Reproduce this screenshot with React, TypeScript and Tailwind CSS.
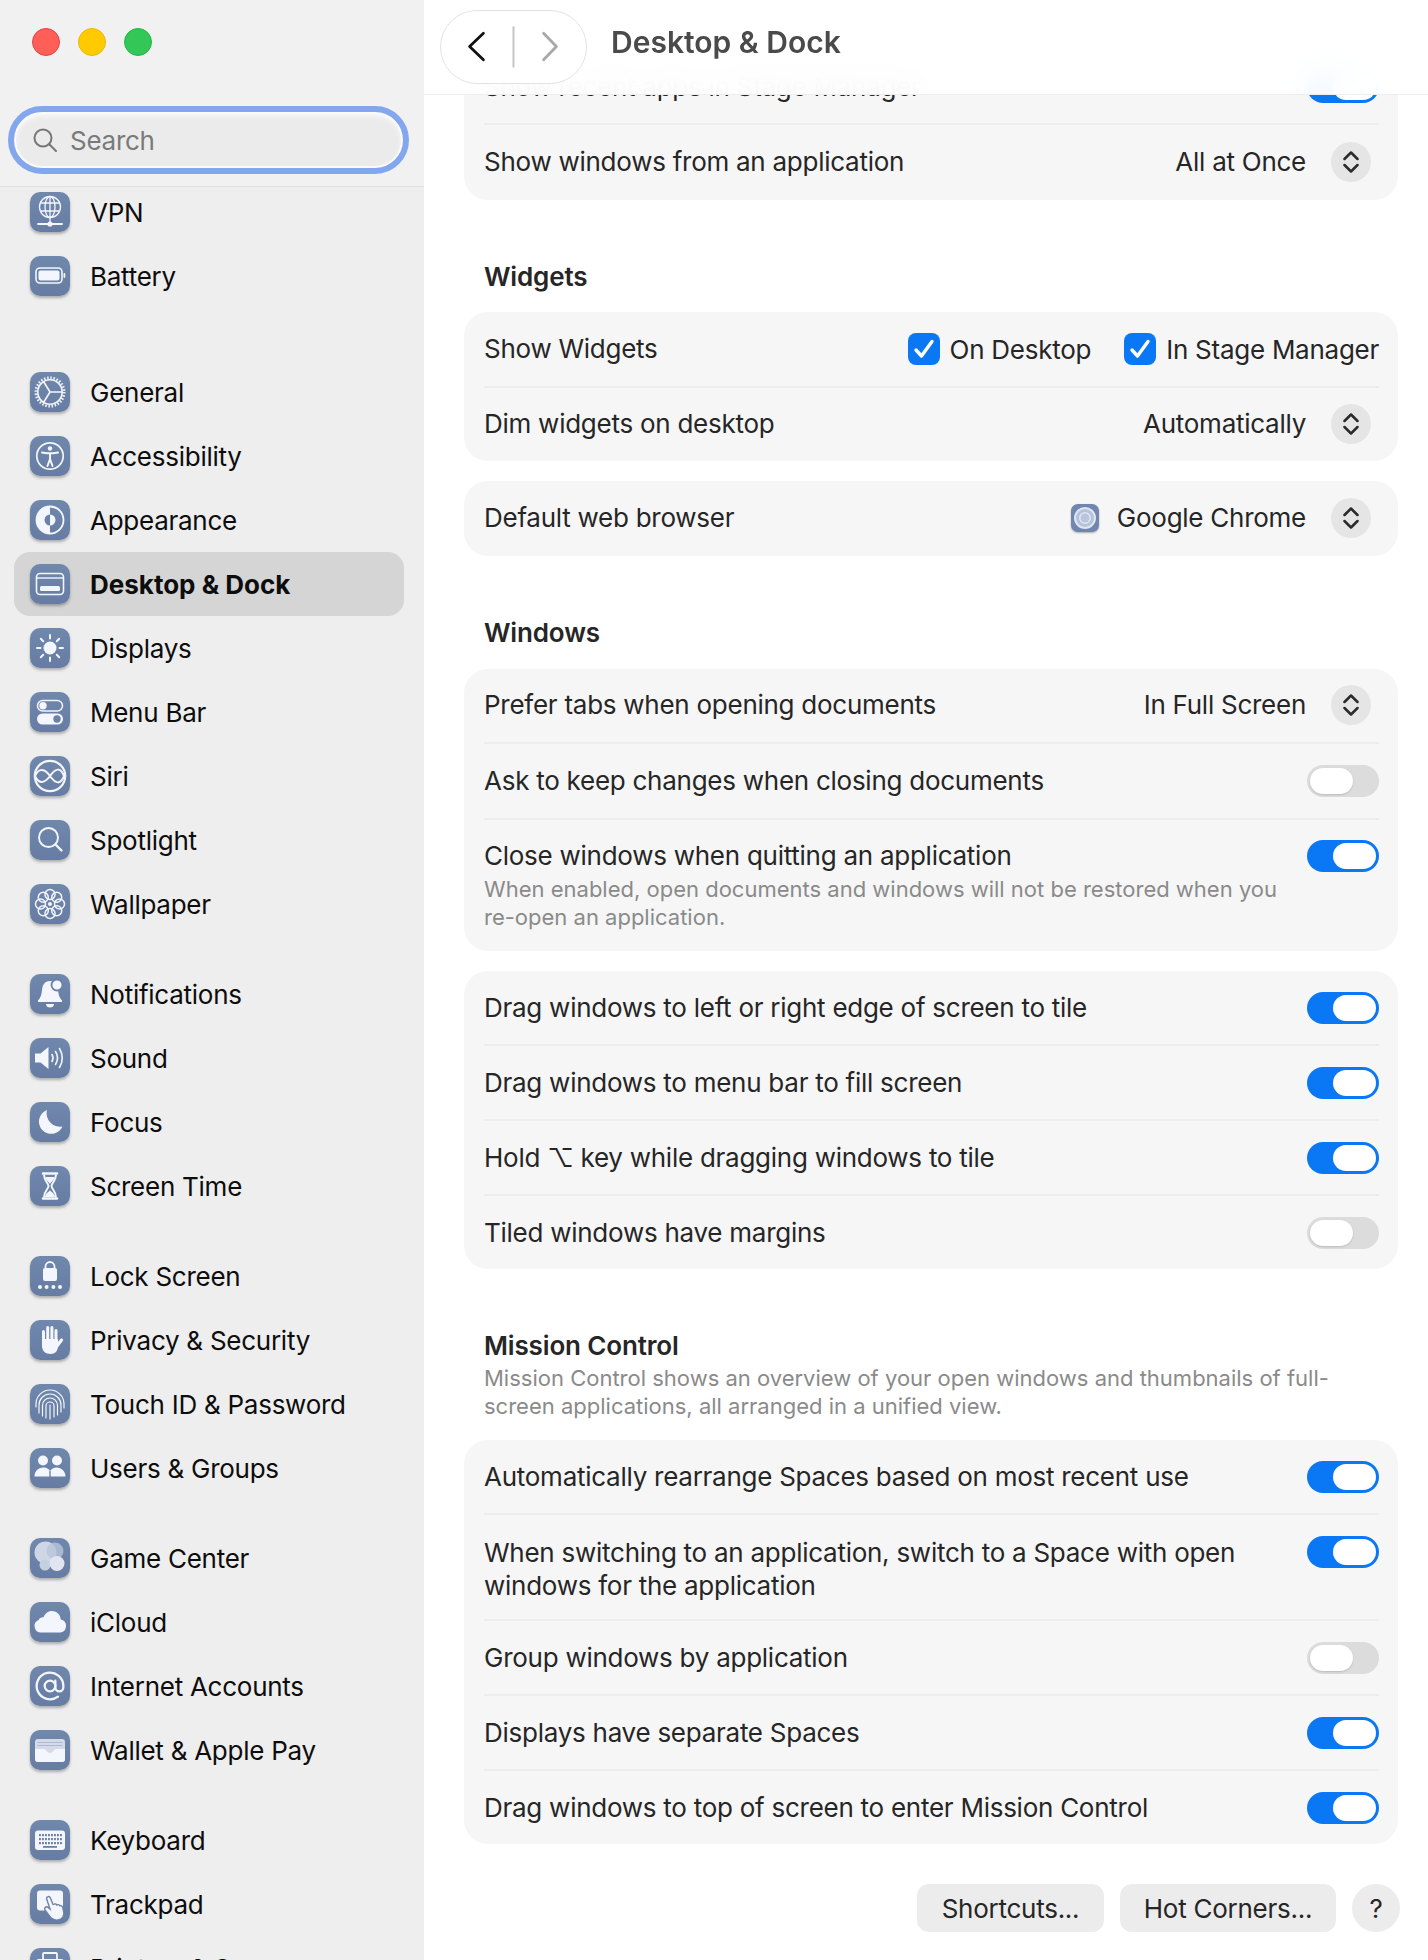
import React from "react";
import { AtSign } from "lucide-react";

const W = "#f3f6fc";
const B = "#6b81a7";

const Svg = ({ children }: { children: React.ReactNode }) => (
  <svg viewBox="0 0 40 40" className="w-10 h-10 block" fill="none">{children}</svg>
);

const icons: Record<string, React.ReactNode> = {
  vpn: (
    <Svg>
      <g stroke={W} strokeWidth="1.3">
        <circle cx="20" cy="15" r="10.5" />
        <ellipse cx="20" cy="15" rx="5" ry="10.5" />
        <path d="M20 4.5V25.5M10.5 11H29.5M10.5 19H29.5M20 25.5V32" />
        <path d="M8 32H32" strokeWidth="1.8" strokeLinecap="round" />
      </g>
      <circle cx="20" cy="32" r="2.6" fill={W} />
    </Svg>
  ),
  battery: (
    <Svg>
      <rect x="6" y="12" width="26" height="15" rx="4" stroke={W} strokeWidth="1.6" />
      <rect x="8.5" y="14.5" width="21" height="10" rx="2" fill={W} />
      <rect x="33.5" y="17" width="1.8" height="5" rx="0.9" fill={W} />
    </Svg>
  ),
  general: (
    <Svg>
      <circle cx="20" cy="20" r="14.2" stroke={W} strokeWidth="2.6" strokeDasharray="1.5 1.68" />
      <circle cx="20" cy="20" r="12.2" stroke={W} strokeWidth="1.6" />
      <path d="M20 20L13.5 9.5M20 20H32M20 20L13.5 30.5" stroke={W} strokeWidth="1.6" />
    </Svg>
  ),
  accessibility: (
    <Svg>
      <circle cx="20" cy="20" r="13.2" stroke={W} strokeWidth="1.7" />
      <circle cx="20" cy="12.5" r="2.2" fill={W} />
      <path d="M12 16.5C15 17.5 25 17.5 28 16.5M20 17.5V23M20 23L17.5 30M20 23L22.5 30" stroke={W} strokeWidth="2" strokeLinecap="round" />
    </Svg>
  ),
  appearance: (
    <Svg>
      <circle cx="20" cy="20" r="13.5" stroke={W} strokeWidth="1.8" />
      <path d="M20 6.5A13.5 13.5 0 0 0 20 33.5Z" fill={W} />
      <path d="M20 14.5A5.5 5.5 0 0 0 20 25.5Z" fill={B} />
      <path d="M20 14.5A5.5 5.5 0 0 1 20 25.5Z" fill={W} />
    </Svg>
  ),
  desktop: (
    <Svg>
      <rect x="6.5" y="9.5" width="27" height="21" rx="3.5" stroke={W} strokeWidth="1.6" />
      <path d="M7 14H33" stroke={W} strokeWidth="1.4" />
      <rect x="10" y="22" width="20" height="5" rx="1.5" fill={W} />
    </Svg>
  ),
  displays: (
    <Svg>
      <circle cx="20" cy="20" r="6.5" fill={W} />
      <path d="M20 7V10.5M20 29.5V33M7 20H10.5M29.5 20H33M10.8 10.8L13.2 13.2M26.8 26.8L29.2 29.2M10.8 29.2L13.2 26.8M26.8 13.2L29.2 10.8" stroke={W} strokeWidth="2" strokeLinecap="round" />
    </Svg>
  ),
  menubar: (
    <Svg>
      <rect x="7.5" y="8.5" width="25" height="10.5" rx="5.25" stroke={W} strokeWidth="1.5" />
      <circle cx="13" cy="13.7" r="3.7" fill={W} />
      <rect x="7" y="21.5" width="26" height="11" rx="5.5" fill={W} />
      <circle cx="27" cy="27" r="3.7" fill={B} />
    </Svg>
  ),
  siri: (
    <Svg>
      <circle cx="20" cy="20" r="15.2" stroke={W} strokeWidth="2.2" />
      <path d="M5 20C9 11 15 13 20 20S31 31 35 17M5 20C9 29 15 27 20 20S31 9 35 23" stroke={W} strokeWidth="2" />
    </Svg>
  ),
  spotlight: (
    <Svg>
      <circle cx="18.5" cy="17.5" r="9.5" stroke={W} strokeWidth="1.9" />
      <path d="M25.5 24.5L31.5 30.5" stroke={W} strokeWidth="2.4" strokeLinecap="round" />
    </Svg>
  ),
  wallpaper: (
    <Svg>
      <g stroke={W} strokeWidth="1.5">
        {[0, 45, 90, 135, 180, 225, 270, 315].map((a) => (
          <circle key={a} cx="20" cy="10.5" r="5" transform={`rotate(${a} 20 20)`} />
        ))}
      </g>
      <circle cx="20" cy="20" r="2" fill={W} />
    </Svg>
  ),
  notifications: (
    <Svg>
      <path d="M20 7C14.5 7 12.5 11 12 16C11.5 21 10.5 24 8 26.5V28H32V26.5C29.5 24 28.5 21 28 16C27.5 11 25.5 7 20 7Z" fill={W} />
      <path d="M16 30H24C24 32.5 22 33.5 20 33.5S16 32.5 16 30Z" fill={W} />
      <circle cx="27" cy="11" r="5.5" fill={W} stroke={B} strokeWidth="1.8" />
    </Svg>
  ),
  sound: (
    <Svg>
      <path d="M5 15.5H10.5L18.5 9V31L10.5 24.5H5Z" fill={W} strokeLinejoin="round" />
      <path d="M22 16.5C23.2 18.5 23.2 21.5 22 23.5M25.5 13.5C28 17.5 28 22.5 25.5 26.5M29.5 10.5C33 16.5 33 23.5 29.5 29.5" stroke={W} strokeWidth="1.6" strokeLinecap="round" />
    </Svg>
  ),
  focus: (
    <Svg>
      <path d="M17 8A12.3 12.3 0 1 0 32.5 24.5A13.5 13.5 0 0 1 17 8Z" fill={W} />
    </Svg>
  ),
  screentime: (
    <Svg>
      <path d="M13 7.5H27M13 32.5H27" stroke={W} strokeWidth="2.6" strokeLinecap="round" />
      <path d="M14 8.5C14 15 18.5 17 18.5 20S14 25 14 31.5M26 8.5C26 15 21.5 17 21.5 20S26 25 26 31.5" stroke={W} strokeWidth="2" />
      <path d="M15.5 11H24.5C24 14.5 21 16 20 18C19 16 16 14.5 15.5 11ZM15 31C15.5 27 19 26 20 24C21 26 24.5 27 25 31Z" fill={W} />
    </Svg>
  ),
  lock: (
    <Svg>
      <rect x="13" y="12" width="14" height="13" rx="2" fill={W} />
      <path d="M15.5 13V10.5A4.5 4.5 0 0 1 24.5 10.5V13" stroke={W} strokeWidth="1.8" />
      {[10, 16.6, 23.4, 30].map((x) => (
        <circle key={x} cx={x} cy="31" r="2" fill={W} />
      ))}
    </Svg>
  ),
  privacy: (
    <Svg>
      <g stroke={W} strokeWidth="3" strokeLinecap="round">
        <path d="M13.5 22V11.5M17.7 22V7.5M21.9 22V7.5M26 22V10.5" />
        <path d="M27 26L31.5 20" strokeWidth="3.2" />
      </g>
      <path d="M12 19H28V26C28 31 25 34 20.5 34C15.5 34 12 31 12 26Z" fill={W} />
    </Svg>
  ),
  touchid: (
    <Svg>
      <g stroke={W} strokeWidth="1.2" strokeLinecap="round">
        <path d="M6 23V20A14 14 0 0 1 34 20V24" />
        <path d="M9 29V21A11 11 0 0 1 31 21V28" />
        <path d="M12.5 32V21.5A7.5 7.5 0 0 1 27.5 21.5V31" />
        <path d="M16 34V22A4 4 0 0 1 24 22V33" />
        <path d="M20 21V35" />
      </g>
    </Svg>
  ),
  users: (
    <Svg>
      <circle cx="13" cy="12.5" r="5" fill={W} />
      <circle cx="27" cy="12.5" r="5" fill={W} />
      <path d="M4.5 28.5C4.5 23 8.5 19.5 13 19.5S19 21.5 20 23C21 21.5 23 19.5 27 19.5S35.5 23 35.5 28.5Z" fill={W} />
      <path d="M20 23V29" stroke={B} strokeWidth="1.4" />
    </Svg>
  ),
  gamecenter: (
    <Svg>
      <circle cx="15.5" cy="14.5" r="11" fill="#cfd7e6" />
      <circle cx="25" cy="13" r="8.5" fill="#b9c4d9" fillOpacity="0.8" />
      <circle cx="15" cy="27" r="5.5" fill="#c4cfe0" />
      <circle cx="27" cy="25.5" r="7.5" fill="#e0e6f1" />
    </Svg>
  ),
  icloud: (
    <Svg>
      <path d="M11 30.5A6.5 6.5 0 0 1 8.6 18C9.5 16 11.5 15 13.5 15.3C15 11.5 18 9 22 9C27 9 30.5 13 30.7 17.5A6.6 6.6 0 0 1 30.5 30.5Z" fill={W} />
    </Svg>
  ),
  internet: <AtSign size={32} strokeWidth={1.7} color={W} />,
  wallet: (
    <Svg>
      <rect x="5" y="9" width="30" height="23" rx="3" fill="#d4dae8" />
      <path d="M7.5 12.5H32.5M7.5 15.5H32.5" stroke="#aeb9cf" strokeWidth="1.2" />
      <path d="M5 19H14C16 19 17 23 20 23S24 19 26 19H35V29A3 3 0 0 1 32 32H8A3 3 0 0 1 5 29Z" fill={W} />
    </Svg>
  ),
  keyboard: (
    <Svg>
      <rect x="5" y="10.5" width="30" height="19.5" rx="3" fill={W} />
      <g fill={B}>
        {[14, 18, 22].map((y) =>
          [9, 12, 15, 18, 21, 24, 27, 30].map((x) => <rect key={`${x}-${y}`} x={x} y={y} width="1.9" height="2.2" />),
        )}
        <rect x="13" y="26" width="14" height="1.8" />
      </g>
    </Svg>
  ),
  trackpad: (
    <Svg>
      <rect x="7" y="6.5" width="26" height="20" rx="3" fill={W} />
      <path d="M16.5 14.5A2 2 0 0 1 20.3 13.7L23 20.5L24.2 20.1A2 2 0 0 1 26.7 21L27.5 20.8A2 2 0 0 1 30 21.8A2 2 0 0 1 32.6 23L33.6 27C35 32 32 35.5 28 36C24 36.5 21.5 35 19.5 32L15 26A2 2 0 0 1 18 23.4L20 25Z" fill={W} stroke={B} strokeWidth="1.4" />
    </Svg>
  ),
  printer: (
    <Svg>
      <rect x="13" y="5" width="14" height="9" rx="1" stroke={W} strokeWidth="1.8" />
      <rect x="6" y="11" width="28" height="14" rx="3" fill={W} />
    </Svg>
  ),
};

const Row = ({ icon, label, active, className = "" }: { icon: string; label: string; active?: boolean; className?: string }) => (
  <div className={`h-16 shrink-0 ml-[14px] w-[390px] pl-4 rounded-2xl flex items-center gap-5 ${active ? "bg-[#d5d5d5] font-bold tracking-normal" : ""} ${className}`}>
    <div className="w-10 h-10 shrink-0 rounded-[10px] bg-gradient-to-b from-[#7188ad] to-[#667ca3] shadow-[0_2px_3px_rgba(0,0,0,0.28)] flex items-center justify-center">
      {icons[icon]}
    </div>
    <span className="mt-[2px] text-[26px] leading-8 text-[#0d0d0d] whitespace-nowrap">{label}</span>
  </div>
);

const Sep = () => <div className="h-[2px] bg-[#ededed]" />;

const Toggle = ({ on }: { on?: boolean }) =>
  on ? (
    <div className="w-[72px] h-8 shrink-0 rounded-full bg-[#0a78f5] flex items-center justify-end pr-[3px]">
      <div className="w-[43px] h-[26px] rounded-full bg-white" />
    </div>
  ) : (
    <div className="w-[72px] h-8 shrink-0 rounded-full bg-[#dcdcdc] flex items-center pl-[3px]">
      <div className="w-[43px] h-[26px] rounded-full bg-white shadow-[0_1px_2px_rgba(0,0,0,0.15)]" />
    </div>
  );

const Stepper = () => (
  <div className="w-10 h-10 shrink-0 mr-2 -mt-[1px] rounded-full bg-[#e5e5e5] flex items-center justify-center">
    <svg viewBox="0 0 16 24" className="w-4 h-6 block" fill="none" stroke="#2b2b2b" strokeWidth="2.5" strokeLinecap="round" strokeLinejoin="round">
      <path d="M1.5 9L8 2.5L14.5 9M1.5 15L8 21.5L14.5 15" />
    </svg>
  </div>
);

const Check = ({ label }: { label: string }) => (
  <div className="flex items-center gap-[10px]">
    <div className="w-8 h-8 rounded-lg bg-[#0a78f5] flex items-center justify-center">
      <svg viewBox="0 0 32 32" className="w-8 h-8" fill="none" stroke="#fff" strokeWidth="3.4" strokeLinecap="round" strokeLinejoin="round">
        <path d="M8 17L13.5 23L24 8.5" />
      </svg>
    </div>
    <span>{label}</span>
  </div>
);

const SetRow = ({ label, h = "h-[73px]", up, children }: { label: React.ReactNode; h?: string; up?: boolean; children?: React.ReactNode }) => (
  <div className={`${h} flex items-center justify-between`}>
    <span className={`whitespace-nowrap ${up ? "-mt-[2px]" : ""}`}>{label}</span>
    {children}
  </div>
);

const Card = ({ className = "", children }: { className?: string; children: React.ReactNode }) => (
  <div className={`w-[934px] ml-10 pl-5 pr-[19px] rounded-[24px] bg-[#f6f6f6] ${className}`}>{children}</div>
);

const Heading = ({ className, children }: { className: string; children: React.ReactNode }) => (
  <div className={`ml-[60px] h-8 leading-8 font-semibold tracking-[-0.15px] text-[#262626] ${className}`}>{children}</div>
);

const Pick = ({ children }: { children: React.ReactNode }) => (
  <div className="flex items-center gap-[25px]">
    <div className="-mt-[2px]">{children}</div>
    <Stepper />
  </div>
);

export default function App() {
  return (
    <div className="w-[1428px] h-[1960px] overflow-hidden flex bg-white font-['Inter','Liberation_Sans',sans-serif] text-[26px] tracking-[-0.26px] text-[#262626]">
      <aside className="w-[424px] shrink-0 h-full bg-[#eeeeee] overflow-hidden flex flex-col">
        <div className="h-[187px] shrink-0 bg-[#f1f1f1] border-b border-[#e0e0e0] pl-2">
          <div className="flex gap-[18px] pl-6 pt-7">
            <div className="w-7 h-7 rounded-full bg-[#ff5f57] border border-[#e5404a]" />
            <div className="w-7 h-7 rounded-full bg-[#ffcb00] border border-[#eeb800]" />
            <div className="w-7 h-7 rounded-full bg-[#33c758] border border-[#1db93f]" />
          </div>
          <div className="mt-[50px] w-[401px] h-[68px] rounded-full border-[6px] border-[#83a7ef] bg-[#ebebeb] shadow-[inset_0_0_0_2px_#fafafa,inset_0_3px_6px_rgba(255,255,255,0.9)] flex items-center pl-[19px] gap-[13px] text-[#7a7a7a]">
            <svg viewBox="0 0 24 24" className="w-6 h-6 shrink-0" fill="none" stroke="#777" strokeWidth="2" strokeLinecap="round">
              <circle cx="10" cy="10" r="8.5" />
              <path d="M16.5 16.5L23 23" />
            </svg>
            <span>Search</span>
          </div>
        </div>
        <div className="-mt-[7px] flex flex-col">
          <Row icon="vpn" label="VPN" />
          <Row icon="battery" label="Battery" />
          <Row icon="general" label="General" className="mt-[52px]" />
          <Row icon="accessibility" label="Accessibility" />
          <Row icon="appearance" label="Appearance" />
          <Row icon="desktop" label="Desktop & Dock" active />
          <Row icon="displays" label="Displays" />
          <Row icon="menubar" label="Menu Bar" />
          <Row icon="siri" label="Siri" />
          <Row icon="spotlight" label="Spotlight" />
          <Row icon="wallpaper" label="Wallpaper" />
          <Row icon="notifications" label="Notifications" className="mt-[26px]" />
          <Row icon="sound" label="Sound" />
          <Row icon="focus" label="Focus" />
          <Row icon="screentime" label="Screen Time" />
          <Row icon="lock" label="Lock Screen" className="mt-[26px]" />
          <Row icon="privacy" label="Privacy & Security" />
          <Row icon="touchid" label="Touch ID & Password" />
          <Row icon="users" label="Users & Groups" />
          <Row icon="gamecenter" label="Game Center" className="mt-[26px]" />
          <Row icon="icloud" label="iCloud" />
          <Row icon="internet" label="Internet Accounts" />
          <Row icon="wallet" label="Wallet & Apple Pay" />
          <Row icon="keyboard" label="Keyboard" className="mt-[26px]" />
          <Row icon="trackpad" label="Trackpad" />
          <Row icon="printer" label="Printers & Scanners" />
        </div>
      </aside>

      <main className="relative flex-1 h-full overflow-hidden pt-[50px]">
        <header className="absolute top-0 inset-x-0 h-[95px] z-10 bg-white/95 backdrop-blur-[14px] border-b border-[#eeeeee] flex items-center">
          <div className="ml-4 -mt-[1px] w-[147px] h-[74px] rounded-[37px] border border-[#e2e2e2] bg-white/70 flex items-center justify-center">
            <svg viewBox="0 0 147 74" className="w-[147px] h-[74px]" fill="none" strokeLinecap="round" strokeLinejoin="round">
              <path d="M43 23L29 36.5L43 50" stroke="#111" strokeWidth="2.8" />
              <path d="M73.5 17V57" stroke="#c4c4c4" strokeWidth="2" />
              <path d="M104 23L117 36.5L104 50" stroke="#a8a8a8" strokeWidth="2.8" />
            </svg>
          </div>
          <h1 className="ml-6 -mt-[10px] text-[30px] font-semibold tracking-normal text-[#4a4a4a] whitespace-nowrap">Desktop & Dock</h1>
        </header>

        <Card>
          <SetRow label="Show recent apps in Stage Manager">
            <Toggle on />
          </SetRow>
          <Sep />
          <SetRow label="Show windows from an application" h="h-[75px]" up>
            <Pick>
              <span>All at Once</span>
            </Pick>
          </SetRow>
        </Card>

        <Heading className="mt-[61px] mb-[19px]">Widgets</Heading>
        <Card>
          <SetRow label="Show Widgets" h="h-[74px]" up>
            <div className="flex gap-[33px] items-center">
              <Check label="On Desktop" />
              <Check label="In Stage Manager" />
            </div>
          </SetRow>
          <Sep />
          <SetRow label="Dim widgets on desktop" up>
            <Pick>
              <span>Automatically</span>
            </Pick>
          </SetRow>
        </Card>

        <Card className="mt-5">
          <SetRow label="Default web browser" h="h-[75px]" up>
            <Pick>
              <div className="flex items-center gap-[18px]">
                <div className="w-7 h-7 rounded-[7px] bg-[#6f87af] shadow-[0_1px_2px_rgba(0,0,0,0.3)] flex items-center justify-center">
                  <svg viewBox="0 0 28 28" className="w-7 h-7" fill="none">
                    <circle cx="14" cy="14" r="11" fill="#dfe5f1" />
                    <circle cx="14" cy="14" r="7.5" fill="none" stroke="#b5c2da" strokeWidth="3" />
                    <circle cx="14" cy="14" r="4.5" fill="#b8c5dc" />
                  </svg>
                </div>
                <span>Google Chrome</span>
              </div>
            </Pick>
          </SetRow>
        </Card>

        <Heading className="mt-[61px] mb-5">Windows</Heading>
        <Card>
          <SetRow label="Prefer tabs when opening documents" up>
            <Pick>
              <span>In Full Screen</span>
            </Pick>
          </SetRow>
          <Sep />
          <SetRow label="Ask to keep changes when closing documents" h="h-[74px]" up>
            <Toggle />
          </SetRow>
          <Sep />
          <div className="pt-5 pb-5 flex justify-between items-start">
            <div>
              <div className="leading-8 whitespace-nowrap">Close windows when quitting an application</div>
              <div className="mt-[3px] text-[22px] leading-7 tracking-normal text-[#8a8a8a] w-[820px]">
                When enabled, open documents and windows will not be restored when you re-open an application.
              </div>
            </div>
            <Toggle on />
          </div>
        </Card>

        <Card className="mt-5">
          <SetRow label="Drag windows to left or right edge of screen to tile">
            <Toggle on />
          </SetRow>
          <Sep />
          <SetRow label="Drag windows to menu bar to fill screen">
            <Toggle on />
          </SetRow>
          <Sep />
          <SetRow label="Hold ⌥ key while dragging windows to tile">
            <Toggle on />
          </SetRow>
          <Sep />
          <SetRow label="Tiled windows have margins">
            <Toggle />
          </SetRow>
        </Card>

        <Heading className="mt-[61px]">Mission Control</Heading>
        <div className="ml-[60px] mt-[2px] mb-5 w-[900px] text-[22px] leading-7 tracking-normal text-[#8a8a8a]">
          Mission Control shows an overview of your open windows and thumbnails of full-screen applications, all arranged in a unified view.
        </div>
        <Card>
          <SetRow label="Automatically rearrange Spaces based on most recent use">
            <Toggle on />
          </SetRow>
          <Sep />
          <div className="pt-[21px] pb-[17px] flex justify-between items-start">
            <div className="leading-[33px] w-[800px]">When switching to an application, switch to a Space with open windows for the application</div>
            <Toggle on />
          </div>
          <Sep />
          <SetRow label="Group windows by application">
            <Toggle />
          </SetRow>
          <Sep />
          <SetRow label="Displays have separate Spaces">
            <Toggle on />
          </SetRow>
          <Sep />
          <SetRow label="Drag windows to top of screen to enter Mission Control">
            <Toggle on />
          </SetRow>
        </Card>

        <div className="mt-10 mr-7 flex justify-end gap-4">
          <button className="w-[187px] h-12 rounded-xl bg-[#ececec]">Shortcuts...</button>
          <button className="w-[216px] h-12 rounded-xl bg-[#ececec]">Hot Corners...</button>
          <button className="w-12 h-12 rounded-full bg-[#ececec]">?</button>
        </div>
      </main>
    </div>
  );
}
